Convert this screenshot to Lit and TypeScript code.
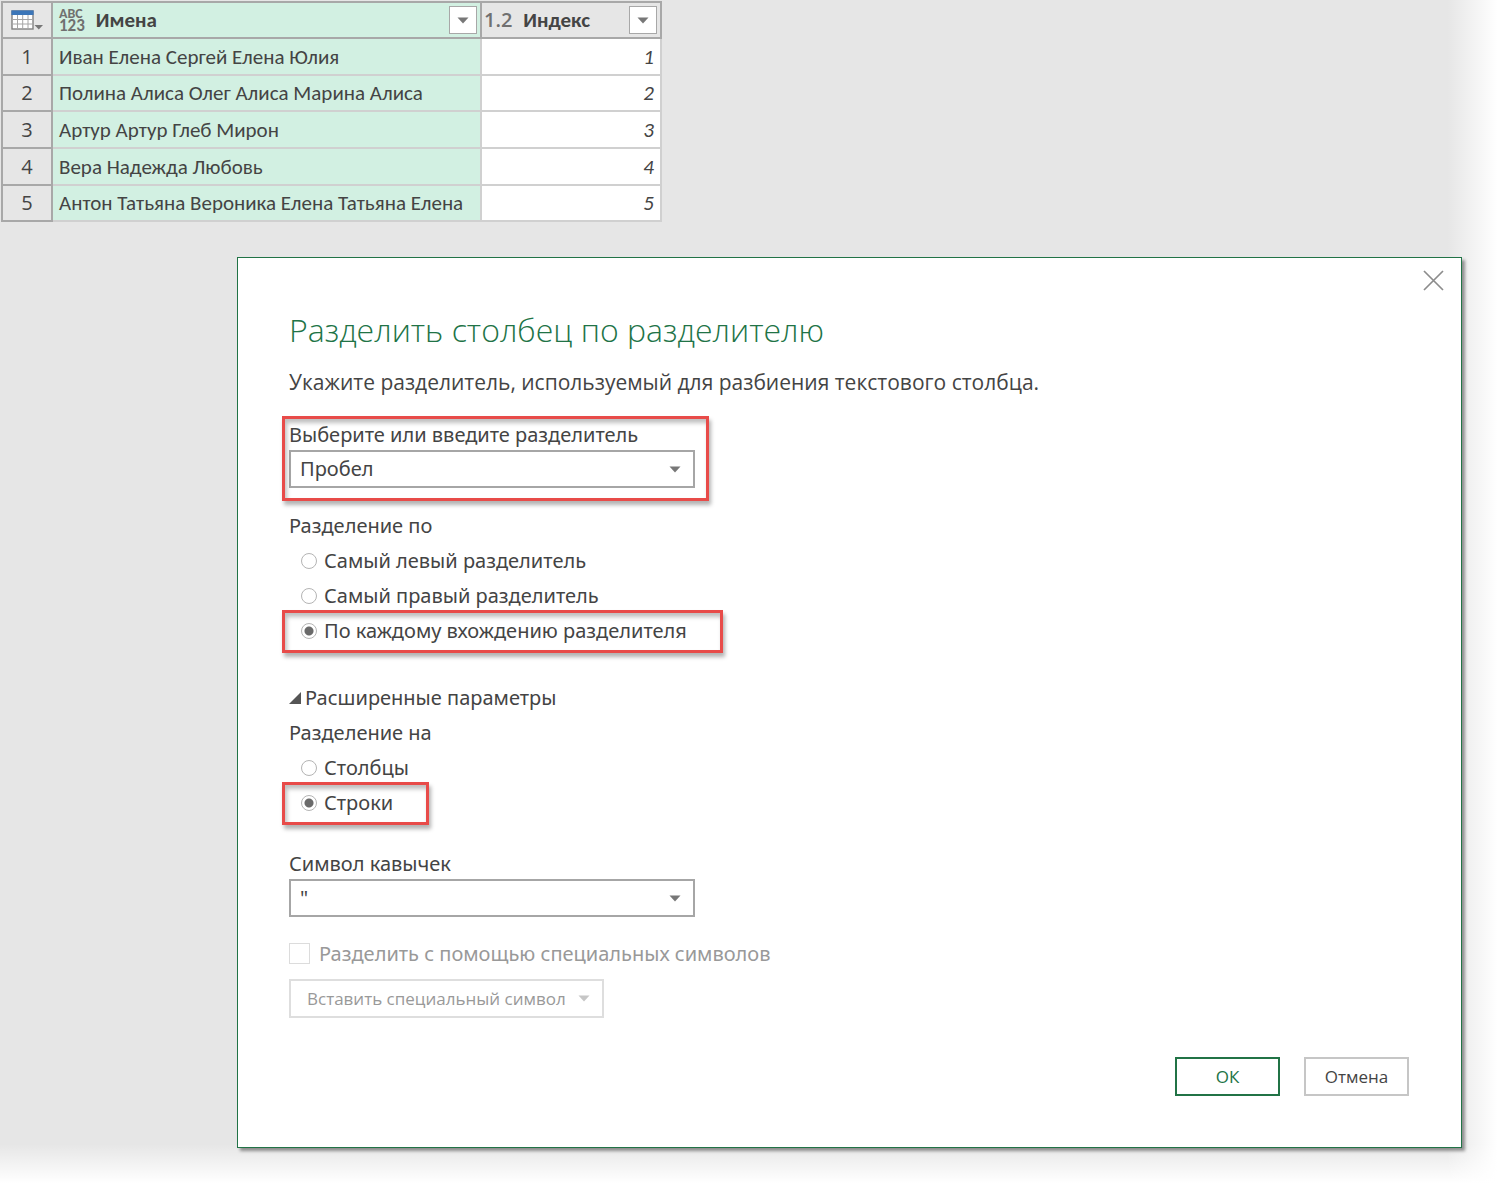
import { LitElement, html, css, nothing } from "lit";
import { customElement, state } from "lit/decorators.js";

interface Row {
  names: string;
  index: number;
}

interface Option {
  value: string;
  label: string;
}

const ROWS: Row[] = [
  { names: "Иван Елена Сергей Елена Юлия", index: 1 },
  { names: "Полина Алиса Олег Алиса Марина Алиса", index: 2 },
  { names: "Артур Артур Глеб Мирон", index: 3 },
  { names: "Вера Надежда Любовь", index: 4 },
  { names: "Антон Татьяна Вероника Елена Татьяна Елена", index: 5 },
];

const SPLIT_AT: Option[] = [
  { value: "left", label: "Самый левый разделитель" },
  { value: "right", label: "Самый правый разделитель" },
  { value: "each", label: "По каждому вхождению разделителя" },
];

const SPLIT_INTO: Option[] = [
  { value: "columns", label: "Столбцы" },
  { value: "rows", label: "Строки" },
];

const caret = html`<svg class="caret" width="12" height="7" viewBox="0 0 12 7" aria-hidden="true">
  <path d="M0.5 0.5H11.5L6 6.5Z" fill="currentColor" />
</svg>`;

@customElement("data-preview")
class DataPreview extends LitElement {
  static styles = css`
    :host {
      display: block;
    }
    .grid {
      border-collapse: separate;
      border-spacing: 0;
      border-top: 2px solid #a8a8a8;
      border-left: 2px solid #a8a8a8;
      font-family: Carlito, "Noto Sans", "Open Sans", sans-serif;
      font-size: 21px;
      line-height: 24px;
      color: #444;
    }
    .head,
    .num,
    .cell {
      box-sizing: border-box;
      padding: 0;
      border-right: 2px solid #d0d0d0;
      border-bottom: 2px solid #d0d0d0;
      white-space: nowrap;
    }
    .head {
      height: 36px;
      border-color: #a8a8a8;
      background: #e6e6e6;
      font-weight: 700;
      text-align: left;
    }
    .row {
      height: 37px;
    }
    .row:nth-child(3n + 2) {
      height: 36px;
    }
    .num {
      border-color: #a8a8a8;
      background: #e6e6e6;
      font-family: "Open Sans", "Noto Sans", sans-serif;
      font-size: 20px;
      font-weight: 400;
      text-align: center;
    }
    .cell {
      background: #fff;
    }
    .corner {
      width: 50px;
    }
    .names {
      width: 429px;
      background: #d2f0e2;
    }
    .index {
      width: 180px;
    }
    .cell.names {
      padding-left: 6px;
    }
    .cell.index {
      padding-right: 6px;
      font-style: italic;
      text-align: right;
    }
    .bar {
      display: flex;
      align-items: center;
      gap: 11px;
      padding: 0 3px 0 6px;
    }
    .index .bar {
      padding-left: 2px;
    }
    .title {
      flex: 1;
    }
    .kind {
      display: flex;
      flex-direction: column;
      color: #707070;
    }
    .letters {
      font-size: 14px;
      line-height: 12px;
    }
    .digits {
      font-size: 17px;
      line-height: 12px;
    }
    .decimal {
      font-family: "Open Sans", sans-serif;
      font-size: 20px;
      font-weight: 600;
    }
    .menu,
    .filter {
      display: flex;
      align-items: center;
      justify-content: center;
      box-sizing: border-box;
      padding: 0;
      cursor: pointer;
    }
    .menu {
      width: 48px;
      height: 34px;
      border: 0;
      background: none;
    }
    .filter {
      width: 28px;
      height: 28px;
      border: 1px solid #a8a8a8;
      background: #fff;
      color: #777;
    }
  `;

  render() {
    return html`
      <table class="grid">
        <thead>
          <tr>
            <th class="head corner">
              <button class="menu" aria-label="Меню таблицы">
                <svg width="32" height="20" viewBox="0 0 32 20" aria-hidden="true">
                  <rect x="1" y="1" width="21" height="18" fill="#fff" stroke="#808080" stroke-width="1.4" />
                  <rect x="0.4" y="0.4" width="22.2" height="4.6" fill="#3c76b8" />
                  <path d="M1 9.5H22M1 14H22M6.5 5V19M11.7 5V19M17 5V19" stroke="#a6a6a6" fill="none" />
                  <path d="M23.5 15H32L27.8 19.5Z" fill="#777" />
                </svg>
              </button>
            </th>
            <th class="head names">
              <div class="bar">
                <span class="kind"><span class="letters">ABC</span><span class="digits">123</span></span>
                <span class="title">Имена</span>
                <button class="filter" aria-label="Фильтр: Имена">${caret}</button>
              </div>
            </th>
            <th class="head index">
              <div class="bar">
                <span class="kind decimal">1.2</span>
                <span class="title">Индекс</span>
                <button class="filter" aria-label="Фильтр: Индекс">${caret}</button>
              </div>
            </th>
          </tr>
        </thead>
        <tbody>
          ${ROWS.map(
            (row, i) => html`<tr class="row">
              <th class="num" scope="row">${i + 1}</th>
              <td class="cell names">${row.names}</td>
              <td class="cell index">${row.index}</td>
            </tr>`,
          )}
        </tbody>
      </table>
    `;
  }
}

@customElement("split-dialog")
class SplitDialog extends LitElement {
  @state() private splitAt = "each";
  @state() private splitInto = "rows";
  @state() private advanced = true;

  static styles = css`
    :host {
      display: block;
    }
    .dialog {
      position: relative;
      padding: 48px 52px 51px 51px;
      border: 1px solid #217346;
      background: #fff;
      box-shadow: 3px 3px 3px rgba(0, 0, 0, 0.4);
      color: #444;
      font-family: "Noto Sans", "Open Sans", sans-serif;
      font-size: 20px;
      line-height: 30px;
    }
    .close {
      position: absolute;
      top: 8px;
      right: 13px;
      display: flex;
      padding: 4px;
      border: 0;
      background: none;
      cursor: pointer;
    }
    .title,
    .lead,
    .button {
      font-family: "Open Sans", "Noto Sans", sans-serif;
    }
    .title {
      margin: 0;
      color: #217346;
      font-size: 32px;
      font-weight: 300;
      line-height: 48px;
    }
    .lead {
      margin: 12px 0 22px;
      font-size: 21px;
      line-height: 32px;
    }
    .field,
    .option {
      position: relative;
      width: fit-content;
    }
    .field {
      width: 406px;
      max-width: 100%;
    }
    .label {
      display: block;
    }
    .box {
      position: relative;
      display: flex;
    }
    .select {
      appearance: none;
      box-sizing: border-box;
      width: 100%;
      height: 38px;
      padding: 0 40px 0 9px;
      border: 2px solid #a6a6a6;
      border-radius: 0;
      background: #fff;
      color: inherit;
      font: inherit;
    }
    .box .caret {
      position: absolute;
      top: 16px;
      right: 14px;
      color: #777;
      pointer-events: none;
    }
    .group {
      margin: 20px 0 0;
      line-height: 35px;
    }
    .legend {
      display: block;
    }
    .option {
      display: flex;
      align-items: center;
      gap: 7px;
      padding-left: 12px;
    }
    .radio {
      appearance: none;
      box-sizing: border-box;
      width: 16px;
      height: 16px;
      margin: 0;
      border: 1px solid #b4b4b4;
      border-radius: 50%;
      background: #fff;
    }
    .radio:checked {
      background: radial-gradient(circle, #6a6a6a 4px, #fff 5px);
    }
    .mark {
      position: absolute;
      border: 3px solid #e84b49;
      box-shadow: 2px 4px 4px rgba(0, 0, 0, 0.3), inset 2px 4px 4px rgba(0, 0, 0, 0.25);
      pointer-events: none;
    }
    .field .mark {
      inset: -4px -14px -13px -7px;
    }
    .option .mark {
      inset: -3px -36px -5px -7px;
    }
    .toggle {
      display: flex;
      align-items: center;
      gap: 4px;
      margin-top: 32px;
      padding: 0;
      border: 0;
      background: none;
      color: inherit;
      font: inherit;
      line-height: 35px;
      cursor: pointer;
    }
    .into {
      margin: 0 0 29px;
    }
    .check {
      display: flex;
      align-items: center;
      gap: 9px;
      margin-top: 19px;
      color: #999;
      line-height: 35px;
    }
    .tick {
      appearance: none;
      box-sizing: border-box;
      width: 21px;
      height: 21px;
      margin: 0;
      border: 1px solid #dcdcdc;
      background: #fff;
    }
    .button {
      box-sizing: border-box;
      height: 39px;
      min-width: 105px;
      padding: 0;
      border: 2px solid #c6c6c6;
      background: #fff;
      color: #444;
      font-size: 17px;
      cursor: pointer;
    }
    .insert {
      display: flex;
      align-items: center;
      gap: 12px;
      margin-top: 8px;
      padding: 0 12px 0 16px;
      border-color: #dedede;
      color: #999;
      cursor: default;
    }
    .insert .caret {
      color: #c6c6c6;
    }
    .primary {
      border-color: #217346;
      color: #217346;
    }
    .actions {
      display: flex;
      justify-content: flex-end;
      gap: 24px;
      margin-top: 39px;
    }
  `;

  private options(name: string, list: Option[], current: string, pick: (v: string) => void) {
    return list.map(
      (o) => html`<label class="option">
        <input
          class="radio"
          type="radio"
          name=${name}
          .checked=${o.value === current}
          @change=${() => pick(o.value)}
        />
        <span>${o.label}</span>
        ${o.value === current ? html`<span class="mark"></span>` : nothing}
      </label>`,
    );
  }

  render() {
    return html`
      <section class="dialog" role="dialog" aria-labelledby="title">
        <button class="close" aria-label="Закрыть">
          <svg width="21" height="21" viewBox="0 0 21 21" aria-hidden="true">
            <path d="M1 1L20 20M20 1L1 20" stroke="#8c8c8c" stroke-width="1.7" fill="none" />
          </svg>
        </button>
        <h1 class="title" id="title">Разделить столбец по разделителю</h1>
        <p class="lead">Укажите разделитель, используемый для разбиения текстового столбца.</p>

        <div class="field">
          <label class="label" for="delimiter">Выберите или введите разделитель</label>
          <div class="box">
            <select class="select" id="delimiter">
              <option>Пробел</option>
            </select>
            ${caret}
          </div>
          <span class="mark"></span>
        </div>

        <div class="group" role="radiogroup" aria-labelledby="at">
          <span class="legend" id="at">Разделение по</span>
          ${this.options("at", SPLIT_AT, this.splitAt, (v) => (this.splitAt = v))}
        </div>

        <button
          class="toggle"
          aria-expanded=${this.advanced ? "true" : "false"}
          @click=${() => (this.advanced = !this.advanced)}
        >
          <svg width="12" height="12" viewBox="0 0 12 12" aria-hidden="true">
            <path d="M0 12H12V0Z" fill="#555" />
          </svg>
          Расширенные параметры
        </button>

        ${this.advanced ? this.renderAdvanced() : nothing}

        <div class="actions">
          <button class="button primary">ОК</button>
          <button class="button">Отмена</button>
        </div>
      </section>
    `;
  }

  private renderAdvanced() {
    return html`
      <div class="group into" role="radiogroup" aria-labelledby="into">
        <span class="legend" id="into">Разделение на</span>
        ${this.options("into", SPLIT_INTO, this.splitInto, (v) => (this.splitInto = v))}
      </div>
      <div class="field">
        <label class="label" for="quote">Символ кавычек</label>
        <div class="box">
          <select class="select" id="quote">
            <option>"</option>
          </select>
          ${caret}
        </div>
      </div>
      <label class="check">
        <input class="tick" type="checkbox" disabled />
        <span>Разделить с помощью специальных символов</span>
      </label>
      <button class="button insert" disabled>Вставить специальный символ ${caret}</button>
    `;
  }
}

@customElement("app-root")
class AppRoot extends LitElement {
  static styles = css`
    :host {
      display: block;
    }
    .page {
      box-sizing: border-box;
      min-height: 100vh;
      padding: 1px 39px 37px 1px;
      background:
        linear-gradient(to left, #fff 4px, rgba(255, 255, 255, 0) 54px),
        linear-gradient(to top, #fff 3px, rgba(255, 255, 255, 0) 42px),
        #e6e6e6;
    }
    .popup {
      margin: 35px 0 0 236px;
    }
  `;

  render() {
    return html`
      <main class="page">
        <data-preview></data-preview>
        <split-dialog class="popup"></split-dialog>
      </main>
    `;
  }
}
